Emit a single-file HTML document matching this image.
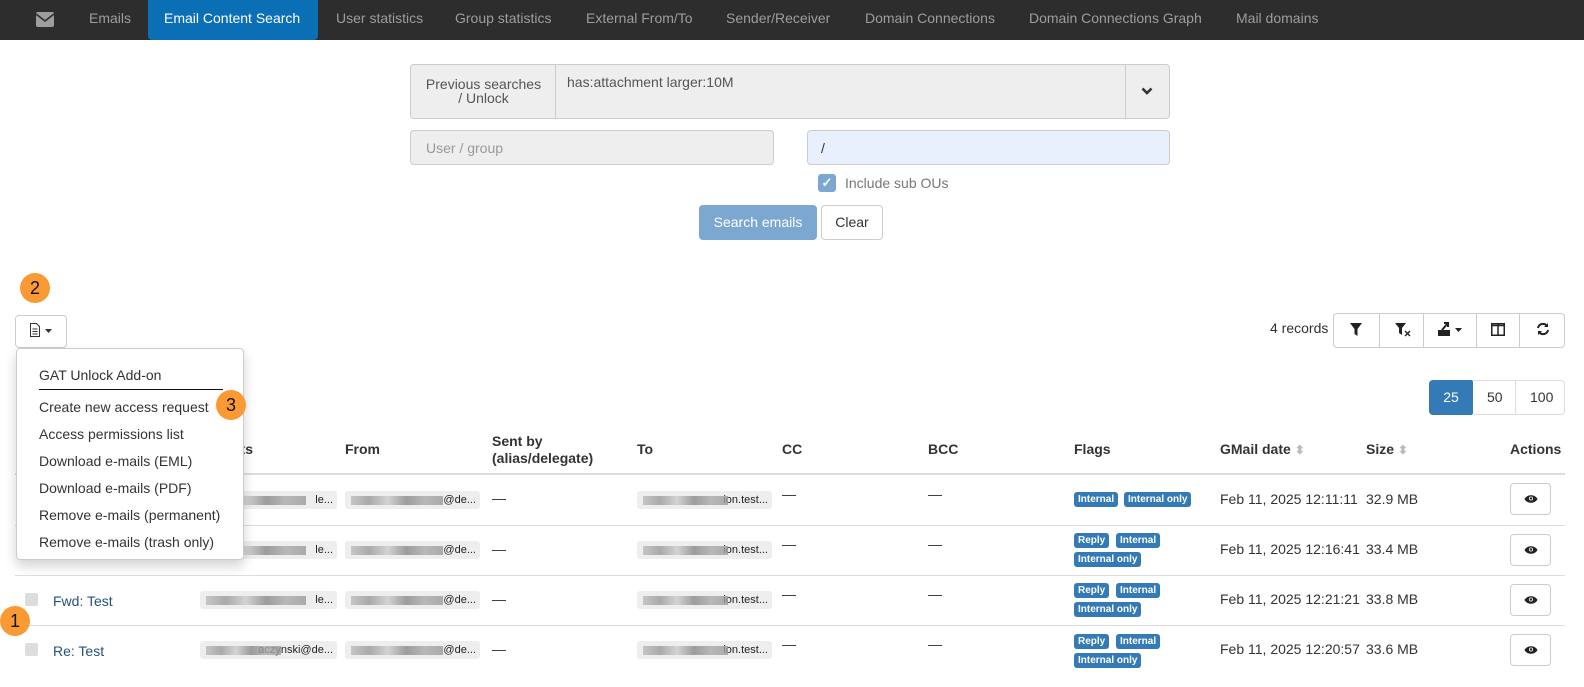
<!DOCTYPE html>
<html><head><meta charset="utf-8"><style>
*{box-sizing:border-box;margin:0;padding:0}
body{width:1584px;height:687px;overflow:hidden;background:#fff;font-family:"Liberation Sans",Arial,sans-serif;font-size:14px;color:#333;position:relative}
.a{position:absolute}
.nav{left:0;top:0;width:1584px;height:40px;background:#2d2d2d}
.nav span{position:absolute;top:0;height:40px;line-height:36px;color:#9d9d9d;font-size:14px}
.nav .act{background:#0b6fb6;color:#fff;border-radius:0 0 4px 4px;padding:0 16px}
.inp{border:1px solid #ccc;border-radius:4px;background:#eee}
.btn{border:1px solid #ccc;border-radius:4px;background:#fff;text-align:center}
.th{font-weight:bold;color:#333}
.hl{height:1px;background:#ddd;left:15px;width:1550px}
.pill{background:#eee;border-radius:3px;height:18px;font-size:11px;line-height:18px;text-align:right;padding-right:4px;color:#222}
.blur{position:absolute;left:6px;top:5px;height:9px;background:linear-gradient(90deg,#bbb,#999 20%,#ccc 40%,#888 60%,#aaa 80%,#999);opacity:.8}
.b{background:#337ab7;color:#fff;font-size:10px;font-weight:bold;border-radius:3px;height:15px;line-height:15px;padding:0 4px;position:absolute}
.eye{width:41px;height:32px;border:1px solid #ccc;border-radius:4px;background:#fff;left:1510px}
.eye svg{position:absolute;left:13px;top:10px}
.cb{width:13px;height:13px;background:#ddd;border-radius:2px;left:25px}
.circ{width:30px;height:30px;border-radius:50%;background:#fb9a34;color:#111;font-size:18px;text-align:center;line-height:30px}
.dd{left:16px;top:348px;width:228px;height:212px;background:#fff;border:1px solid #ccc;border-radius:4px;box-shadow:0 6px 12px rgba(0,0,0,.18)}
.dd div{position:absolute;left:22px;font-size:14px;color:#333}
</style></head><body>
<div class="a nav">
<svg class="a" style="left:36px;top:12px" width="18" height="15" viewBox="0 0 18 15"><rect width="18" height="15" rx="2" fill="#9d9d9d"/><path d="M0 2l9 7 9-7" stroke="#2d2d2d" stroke-width="1.6" fill="none"/></svg>
<span style="left:89px">Emails</span>
<span class="act" style="left:148px;width:170px">Email Content Search</span>
<span style="left:336px">User statistics</span>
<span style="left:455px">Group statistics</span>
<span style="left:586px">External From/To</span>
<span style="left:726px">Sender/Receiver</span>
<span style="left:865px">Domain Connections</span>
<span style="left:1029px">Domain Connections Graph</span>
<span style="left:1236px">Mail domains</span>
</div>

<div class="a inp" style="left:410px;top:64px;width:760px;height:55px"></div>
<div class="a" style="left:555px;top:64px;height:55px;border-left:1px solid #ccc"></div>
<div class="a" style="left:1125px;top:64px;height:55px;border-left:1px solid #ccc"></div>
<div class="a" style="left:412px;top:77px;width:143px;text-align:center;font-size:14px;line-height:14px;color:#555">Previous searches<br>/ Unlock</div>
<div class="a" style="left:567px;top:74px;color:#555">has:attachment larger:10M</div>
<svg class="a" style="left:1141px;top:87px" width="12" height="9" viewBox="0 0 12 9"><path d="M1.5 1.5l4.5 4.5 4.5-4.5" stroke="#333" stroke-width="2.6" fill="none"/></svg>
<div class="a inp" style="left:410px;top:130px;width:364px;height:35px"></div>
<div class="a" style="left:426px;top:140px;color:#999">User / group</div>
<div class="a" style="left:807px;top:130px;width:363px;height:35px;border:1px solid #ccc;border-radius:4px;background:#e8f0fe"></div>
<div class="a" style="left:821px;top:140px;color:#333">/</div>
<div class="a" style="left:818px;top:174px;width:18px;height:18px;background:#7ba7d1;border-radius:3px;color:#fff;font-size:13px;text-align:center;line-height:18px;font-weight:bold">✓</div>
<div class="a" style="left:845px;top:175px;color:#777">Include sub OUs</div>
<div class="a" style="left:699px;top:205px;width:118px;height:35px;background:#7ba7d1;border-radius:4px;color:#fff;text-align:center;line-height:34px">Search emails</div>
<div class="a btn" style="left:821px;top:205px;width:62px;height:35px;line-height:33px">Clear</div>

<div class="a circ" style="left:20px;top:273px">2</div>
<div class="a btn" style="left:15px;top:315px;width:52px;height:33px"></div>
<svg class="a" style="left:29px;top:322px" width="26" height="16" viewBox="0 0 26 16"><path d="M1.5 1.5h6l3 3v10h-9z" stroke="#333" fill="none"/><path d="M3.5 7h5M3.5 9.5h5M3.5 12h5" stroke="#333"/><path d="M16 7h7l-3.5 4z" fill="#333"/></svg>

<div class="a" style="left:1270px;top:320px">4 records</div>
<div class="a" style="left:1333px;top:313px;width:232px;height:35px;border:1px solid #ccc;border-radius:4px"></div>
<div class="a" style="left:1379px;top:313px;height:35px;border-left:1px solid #ccc"></div>
<div class="a" style="left:1423px;top:313px;height:35px;border-left:1px solid #ccc"></div>
<div class="a" style="left:1476px;top:313px;height:35px;border-left:1px solid #ccc"></div>
<div class="a" style="left:1519px;top:313px;height:35px;border-left:1px solid #ccc"></div>
<svg class="a" style="left:1350px;top:323px" width="12" height="13"><path d="M0 0h12l-4.5 6v7l-3-2v-5z" fill="#222"/></svg>
<svg class="a" style="left:1395px;top:323px" width="16" height="14"><path d="M0 0h11l-4 5v7l-3-2v-5z" fill="#222"/><path d="M10 8l5 5M15 8l-5 5" stroke="#222" stroke-width="1.4"/></svg>
<svg class="a" style="left:1437px;top:321px" width="30" height="16"><path d="M1 9h12v6h-12z" fill="#222"/><path d="M5 9l6-7M7 2h4v4" stroke="#222" stroke-width="2" fill="none"/><path d="M18 7h7l-3.5 4z" fill="#222"/></svg>
<svg class="a" style="left:1491px;top:323px" width="14" height="13"><rect x=".75" y=".75" width="12.5" height="11.5" fill="none" stroke="#222" stroke-width="1.5"/><path d="M7 1v11M1 2.5h12" stroke="#222" stroke-width="1.5"/></svg>
<svg class="a" style="left:1536px;top:322px" width="14" height="14" viewBox="0 0 14 14"><path d="M2 6a5 5 0 0 1 9-2M12 8a5 5 0 0 1-9 2" stroke="#222" stroke-width="2" fill="none"/><path d="M12 1v4h-4zM2 13v-4h4z" fill="#222"/></svg>

<div class="a" style="left:1429px;top:380px;width:44px;height:35px;background:#337ab7;border-radius:4px 0 0 4px;color:#fff;text-align:center;line-height:35px">25</div>
<div class="a" style="left:1472px;top:380px;width:93px;height:35px;border:1px solid #ddd;border-left:0;border-radius:0 4px 4px 0"></div>
<div class="a" style="left:1515px;top:380px;height:35px;border-left:1px solid #ddd"></div>
<div class="a" style="left:1487px;top:389px">50</div>
<div class="a" style="left:1530px;top:389px">100</div>

<div class="a th" style="left:232px;top:441px">nts</div>
<div class="a th" style="left:345px;top:441px">From</div>
<div class="a th" style="left:492px;top:433px;line-height:17px">Sent by<br>(alias/delegate)</div>
<div class="a th" style="left:637px;top:441px">To</div>
<div class="a th" style="left:782px;top:441px">CC</div>
<div class="a th" style="left:928px;top:441px">BCC</div>
<div class="a th" style="left:1074px;top:441px">Flags</div>
<div class="a th" style="left:1220px;top:441px">GMail date <span style="color:#bbb;font-size:12px">⬍</span></div>
<div class="a th" style="left:1366px;top:441px">Size <span style="color:#bbb;font-size:12px">⬍</span></div>
<div class="a th" style="left:1510px;top:441px">Actions</div>
<div class="a hl" style="top:473px;height:2px"></div>
<div class="a hl" style="top:525px"></div>
<div class="a hl" style="top:575px"></div>
<div class="a hl" style="top:625px"></div>

<div class="a pill" style="left:200px;top:491px;width:137px"><span class="blur" style="width:100px"></span>le...</div>
<div class="a pill" style="left:345px;top:491px;width:135px"><span class="blur" style="width:92px"></span>@de...</div>
<div class="a pill" style="left:637px;top:491px;width:135px"><span class="blur" style="width:85px"></span>ion.test...</div>
<div class="a pill" style="left:200px;top:541px;width:137px"><span class="blur" style="width:100px"></span>le...</div>
<div class="a pill" style="left:345px;top:541px;width:135px"><span class="blur" style="width:92px"></span>@de...</div>
<div class="a pill" style="left:637px;top:541px;width:135px"><span class="blur" style="width:85px"></span>ion.test...</div>
<div class="a pill" style="left:200px;top:591px;width:137px"><span class="blur" style="width:100px"></span>le...</div>
<div class="a pill" style="left:345px;top:591px;width:135px"><span class="blur" style="width:92px"></span>@de...</div>
<div class="a pill" style="left:637px;top:591px;width:135px"><span class="blur" style="width:85px"></span>ion.test...</div>
<div class="a pill" style="left:200px;top:641px;width:137px"><span class="blur" style="width:75px"></span>aczynski@de...</div>
<div class="a pill" style="left:345px;top:641px;width:135px"><span class="blur" style="width:92px"></span>@de...</div>
<div class="a pill" style="left:637px;top:641px;width:135px"><span class="blur" style="width:85px"></span>ion.test...</div>

<div class="a" style="left:492px;top:490px">—</div><div class="a" style="left:782px;top:486px">—</div><div class="a" style="left:928px;top:486px">—</div>
<div class="a" style="left:492px;top:541px">—</div><div class="a" style="left:782px;top:536px">—</div><div class="a" style="left:928px;top:536px">—</div>
<div class="a" style="left:492px;top:591px">—</div><div class="a" style="left:782px;top:586px">—</div><div class="a" style="left:928px;top:586px">—</div>
<div class="a" style="left:492px;top:641px">—</div><div class="a" style="left:782px;top:636px">—</div><div class="a" style="left:928px;top:636px">—</div>

<div class="a cb" style="top:593px"></div><div class="a cb" style="top:643px"></div>
<div class="a" style="left:53px;top:593px;color:#23527c">Fwd: Test</div>
<div class="a" style="left:53px;top:643px;color:#23527c">Re: Test</div>

<span class="b" style="left:1074px;top:492px">Internal</span><span class="b" style="left:1124px;top:492px">Internal only</span>
<span class="b" style="left:1074px;top:533px">Reply</span><span class="b" style="left:1116px;top:533px">Internal</span><span class="b" style="left:1074px;top:552px">Internal only</span>
<span class="b" style="left:1074px;top:583px">Reply</span><span class="b" style="left:1116px;top:583px">Internal</span><span class="b" style="left:1074px;top:602px">Internal only</span>
<span class="b" style="left:1074px;top:634px">Reply</span><span class="b" style="left:1116px;top:634px">Internal</span><span class="b" style="left:1074px;top:653px">Internal only</span>

<div class="a" style="left:1220px;top:491px">Feb 11, 2025 12:11:11</div><div class="a" style="left:1366px;top:491px">32.9 MB</div>
<div class="a" style="left:1220px;top:541px">Feb 11, 2025 12:16:41</div><div class="a" style="left:1366px;top:541px">33.4 MB</div>
<div class="a" style="left:1220px;top:591px">Feb 11, 2025 12:21:21</div><div class="a" style="left:1366px;top:591px">33.8 MB</div>
<div class="a" style="left:1220px;top:641px">Feb 11, 2025 12:20:57</div><div class="a" style="left:1366px;top:641px">33.6 MB</div>
<div class="a eye" style="top:483px"><svg width="14" height="10" viewBox="0 0 14 10"><path d="M0.5 5C3 0 11 0 13.5 5C11 10 3 10 0.5 5z" fill="#222"/><circle cx="7" cy="4.5" r="2" fill="#fff"/><circle cx="7" cy="4.5" r="1.2" fill="#222"/></svg></div>
<div class="a eye" style="top:534px"><svg width="14" height="10" viewBox="0 0 14 10"><path d="M0.5 5C3 0 11 0 13.5 5C11 10 3 10 0.5 5z" fill="#222"/><circle cx="7" cy="4.5" r="2" fill="#fff"/><circle cx="7" cy="4.5" r="1.2" fill="#222"/></svg></div>
<div class="a eye" style="top:584px"><svg width="14" height="10" viewBox="0 0 14 10"><path d="M0.5 5C3 0 11 0 13.5 5C11 10 3 10 0.5 5z" fill="#222"/><circle cx="7" cy="4.5" r="2" fill="#fff"/><circle cx="7" cy="4.5" r="1.2" fill="#222"/></svg></div>
<div class="a eye" style="top:634px"><svg width="14" height="10" viewBox="0 0 14 10"><path d="M0.5 5C3 0 11 0 13.5 5C11 10 3 10 0.5 5z" fill="#222"/><circle cx="7" cy="4.5" r="2" fill="#fff"/><circle cx="7" cy="4.5" r="1.2" fill="#222"/></svg></div>

<div class="a circ" style="left:0px;top:606px">1</div>

<div class="a dd">
<div style="top:18px">GAT Unlock Add-on</div>
<div style="top:40px;width:184px;height:1px;background:#111;left:22px"></div>
<div style="top:50px">Create new access request</div>
<div style="top:77px">Access permissions list</div>
<div style="top:104px">Download e-mails (EML)</div>
<div style="top:131px">Download e-mails (PDF)</div>
<div style="top:158px">Remove e-mails (permanent)</div>
<div style="top:185px">Remove e-mails (trash only)</div>
</div>
<div class="a circ" style="left:216px;top:390px">3</div>
</body></html>
